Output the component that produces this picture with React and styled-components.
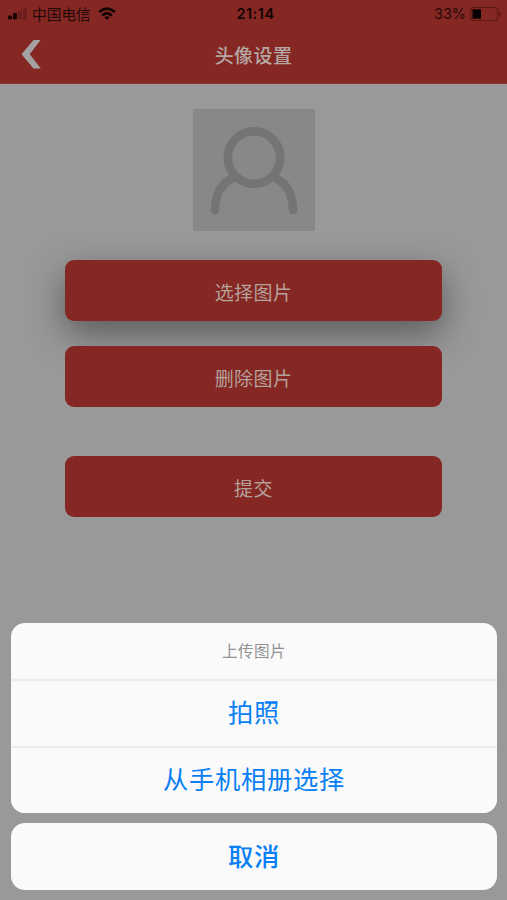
import React from "react";
import styled, { createGlobalStyle } from "styled-components";

const GlobalStyle = createGlobalStyle`
  * { box-sizing: border-box; }
  body { margin: 0; background: #999; }
  button { border: 0; padding: 0; margin: 0; font-family: inherit; display: block; }
`;

const Screen = styled.div`
  width: 507px;
  height: 900px;
  display: flex;
  flex-direction: column;
  overflow: hidden;
  background: #999;
  font-family: "Noto Sans CJK SC", sans-serif;
`;

const Header = styled.header`
  flex: none;
  height: 84px;
  background: #852723;
  border-bottom: 1px solid #8b3330;
`;

const StatusBar = styled.div`
  display: grid;
  grid-template-columns: 1fr auto 1fr;
  align-items: center;
  height: 27px;
  padding: 0 5px 0 8px;
  color: #240909;
  font-size: 14.7px;
  line-height: 27px;
`;

const StatusGroup = styled.div`
  display: flex;
  align-items: center;
  justify-content: ${(p) => (p.$end ? "flex-end" : "flex-start")};
`;

const Carrier = styled.span`
  margin: 0 7px 0 4px;
`;

const Clock = styled.span`
  font: 600 14.4px/27px Inter, sans-serif;
  letter-spacing: 0.55px;
  padding-left: 1px;
  color: #120303;
`;

const Percent = styled.span`
  font: 400 14.4px/27px Inter, sans-serif;
  margin-right: 4px;
`;

const NavBar = styled.div`
  display: grid;
  grid-template-columns: 60px 1fr 60px;
  align-items: center;
  height: 55px;
`;

const BackButton = styled.button`
  width: 22px;
  height: 30px;
  margin-left: 20px;
  background: none;
`;

const Title = styled.h1`
  margin: 0;
  color: #b5a9a6;
  font-size: 19px;
  letter-spacing: 0.4px;
  line-height: 28px;
  font-weight: 500;
  text-align: center;
`;

const Content = styled.main`
  flex: 1;
  display: flex;
  flex-direction: column;
  align-items: center;
  padding-top: 25px;
`;

const Avatar = styled.div`
  width: 122px;
  height: 122px;
  margin-bottom: 29px;
  background: #888;
`;

const ActionButton = styled.button`
  width: 377px;
  height: 61px;
  margin-bottom: ${(p) => p.$gap || 0}px;
  padding-top: 2px;
  border-radius: 9px;
  background: #852723;
  color: #b5a19b;
  font-size: 19px;
  letter-spacing: 0.4px;
  line-height: 58px;
  box-shadow: ${(p) => (p.$raised ? "0 13px 36px rgba(0, 0, 0, 0.41)" : "none")};
  position: relative;
`;

const Sheet = styled.section`
  flex: none;
  display: flex;
  flex-direction: column;
  gap: 10px;
  padding: 0 10px 10px 11px;
`;

const SheetGroup = styled.div`
  overflow: hidden;
  border-radius: 14px;
  background: #fafafa;
`;

const SheetTitle = styled.div`
  height: 56px;
  color: #929292;
  font-size: 15.6px;
  letter-spacing: 0.4px;
  line-height: 55px;
  text-align: center;
`;

const SheetOption = styled.button`
  width: 100%;
  height: 67px;
  padding-bottom: ${(p) => (p.$divided ? 4 : 2)}px;
  border-top: ${(p) => (p.$divided ? "2px solid #ececec" : "0")};
  background: #fafafa;
  color: #087ff5;
  font-size: 25.3px;
  letter-spacing: 0.7px;
  font-weight: ${(p) => (p.$strong ? 500 : 400)};
  line-height: 61px;
`;

function Signal() {
  return (
    <svg width="20" height="14" viewBox="0 0 20 14" fill="#160404">
      <rect x="0" y="8.5" width="4" height="4" rx="1" />
      <rect x="5" y="6" width="4" height="6.5" rx="1" />
      <rect x="10" y="3.5" width="4" height="9" rx="1" opacity=".22" />
      <rect x="15" y="1" width="4" height="11.5" rx="1" opacity=".22" />
    </svg>
  );
}

function Wifi() {
  return (
    <svg width="18" height="14" viewBox="0 0 18 14" fill="none" stroke="#120303" strokeWidth="2.7">
      <path d="M1.1 5Q9-1.7 16.9 5" />
      <path d="M4.1 8.4Q9 4.1 13.9 8.4" />
      <path d="M9 13 6.3 10.2Q9 8.3 11.7 10.2Z" fill="#120303" stroke="none" />
    </svg>
  );
}

function Battery() {
  return (
    <svg width="32" height="16" viewBox="0 0 32 16">
      <rect x="0.8" y="1.5" width="27" height="13" rx="3" fill="none" stroke="#5b1613" strokeWidth="1.1" />
      <rect x="2.5" y="3.3" width="8.5" height="9.4" rx="1" fill="#080101" />
      <path d="M29.2 5.8q1.7.8 1.7 2.2t-1.7 2.2z" fill="#5b1613" />
    </svg>
  );
}

function BackIcon() {
  return (
    <svg width="22" height="30" viewBox="0 0 22 30" fill="#a3a1a1">
      <path d="M13.5 0H20.6L9.7 14.2 20.8 28.5H13.5L1.5 14.2Z" />
    </svg>
  );
}

function Person() {
  return (
    <svg width="122" height="122" viewBox="0 0 122 122" fill="none" stroke="#747474" strokeWidth="8.6" strokeLinecap="round">
      <circle cx="61" cy="48.5" r="26.2" />
      <path d="M39 69.5C27 75 22 88 22 101M83 69.5C95 75 100 88 100 101" />
    </svg>
  );
}

export default function App() {
  return (
    <Screen>
      <GlobalStyle />
      <Header>
        <StatusBar>
          <StatusGroup>
            <Signal />
            <Carrier>中国电信</Carrier>
            <Wifi />
          </StatusGroup>
          <Clock>21:14</Clock>
          <StatusGroup $end>
            <Percent>33%</Percent>
            <Battery />
          </StatusGroup>
        </StatusBar>
        <NavBar>
          <BackButton aria-label="返回">
            <BackIcon />
          </BackButton>
          <Title>头像设置</Title>
        </NavBar>
      </Header>
      <Content>
        <Avatar>
          <Person />
        </Avatar>
        <ActionButton $raised $gap={25}>选择图片</ActionButton>
        <ActionButton $gap={49}>删除图片</ActionButton>
        <ActionButton>提交</ActionButton>
      </Content>
      <Sheet>
        <SheetGroup>
          <SheetTitle>上传图片</SheetTitle>
          <SheetOption $divided>拍照</SheetOption>
          <SheetOption $divided>从手机相册选择</SheetOption>
        </SheetGroup>
        <SheetGroup>
          <SheetOption $strong>取消</SheetOption>
        </SheetGroup>
      </Sheet>
    </Screen>
  );
}
